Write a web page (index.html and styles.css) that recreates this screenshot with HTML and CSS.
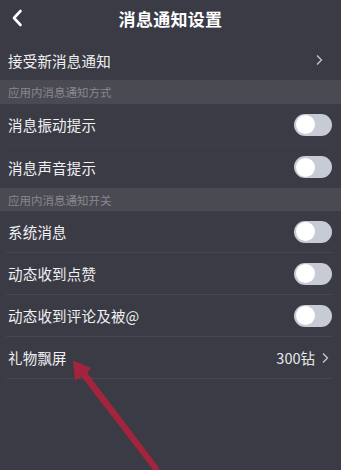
FILE: index.html
```html
<!DOCTYPE html>
<html lang="zh">
<head>
<meta charset="utf-8">
<link rel="stylesheet" href="styles.css">
</head>
<body>
<div class="page">
  <div class="header">
    <svg class="back" width="12" height="18" viewBox="0 0 12 18"><path d="M9.5 2 L3 9 L9.5 16" fill="none" stroke="#fff" stroke-width="2.6" stroke-linecap="round" stroke-linejoin="round"/></svg>
    <div class="title">消息通知设置</div>
  </div>
  <div class="row first">
    <span class="label">接受新消息通知</span>
    <svg class="chev" width="8" height="12" viewBox="0 0 8 12"><path d="M2 1.5 L6.5 6 L2 10.5" fill="none" stroke="#c8c9ce" stroke-width="1.3"/></svg>
  </div>
  <div class="section">应用内消息通知方式</div>
  <div class="row faint"><span class="label">消息振动提示</span><span class="toggle"><span class="knob"></span></span></div>
  <div class="row noline"><span class="label">消息声音提示</span><span class="toggle"><span class="knob"></span></span></div>
  <div class="section s2">应用内消息通知开关</div>
  <div class="row"><span class="label">系统消息</span><span class="toggle"><span class="knob"></span></span></div>
  <div class="row"><span class="label">动态收到点赞</span><span class="toggle"><span class="knob"></span></span></div>
  <div class="row"><span class="label">动态收到评论及被@</span><span class="toggle"><span class="knob"></span></span></div>
  <div class="row"><span class="label">礼物飘屏</span><span class="right"><span class="value">300钻</span><svg class="chev" width="8" height="12" viewBox="0 0 8 12"><path d="M2 1.5 L6.5 6 L2 10.5" fill="none" stroke="#c8c9ce" stroke-width="1.3"/></svg></span></div>
  <svg class="arrow" width="341" height="470" viewBox="0 0 341 470"><polygon points="73,360.5 91,368 87.3,373 159.6,468.4 154.4,471.6 81.8,377 75,380.5" fill="#a2253d"/></svg>
</div>
</body>
</html>
```
FILE: styles.css
```css
html, body { margin: 0; padding: 0; }
body {
  background: #3a3b44;
  font-family: "Noto Sans CJK SC", "Noto Sans", sans-serif;
  color: #f2f2f4;
}
.page {
  position: relative;
  width: 341px;
  height: 470px;
  overflow: hidden;
  background: #3a3b44;
}
.header {
  height: 40px;
  display: flex;
  align-items: center;
  justify-content: center;
  position: relative;
}
.back {
  position: absolute;
  left: 11px;
  top: 9px;
}
.title {
  font-size: 17px;
  font-weight: 700;
  color: #ffffff;
  letter-spacing: 0.3px;
  margin-top: -4px;
}
.row {
  height: 42px;
  display: flex;
  align-items: center;
  justify-content: space-between;
  padding: 0 1px 0 2px;
  box-sizing: border-box;
  border-bottom: 1px solid #454650;
  margin: 0 8px 0 6px;
}
.row.first { height: 40px; border-bottom: none; padding-right: 10px; }
.row.noline { border-bottom: none; }
.row.faint { border-bottom-color: #3e3f48; }
.label {
  font-size: 14.5px;
  color: #f0f0f2;
  letter-spacing: 0.2px;
}
.section {
  height: 24px;
  background: #4a4a52;
  color: #88888f;
  font-size: 11.5px;
  display: flex;
  align-items: center;
  padding-left: 8px;
}
.section.s2 { height: 23px; }
.toggle {
  width: 38px;
  height: 22px;
  border-radius: 11px;
  background: #c7cbd5;
  position: relative;
  display: block;
  flex: none;
}
.knob {
  position: absolute;
  left: 1.5px;
  top: 1.5px;
  width: 19px;
  height: 19px;
  border-radius: 50%;
  background: #ffffff;
}
.right {
  display: flex;
  align-items: center;
  gap: 6px;
  padding-right: 3px;
}
.value {
  font-size: 14.5px;
  color: #e8e8ea;
}
.arrow {
  position: absolute;
  left: 0;
  top: 0;
  pointer-events: none;
}
```
